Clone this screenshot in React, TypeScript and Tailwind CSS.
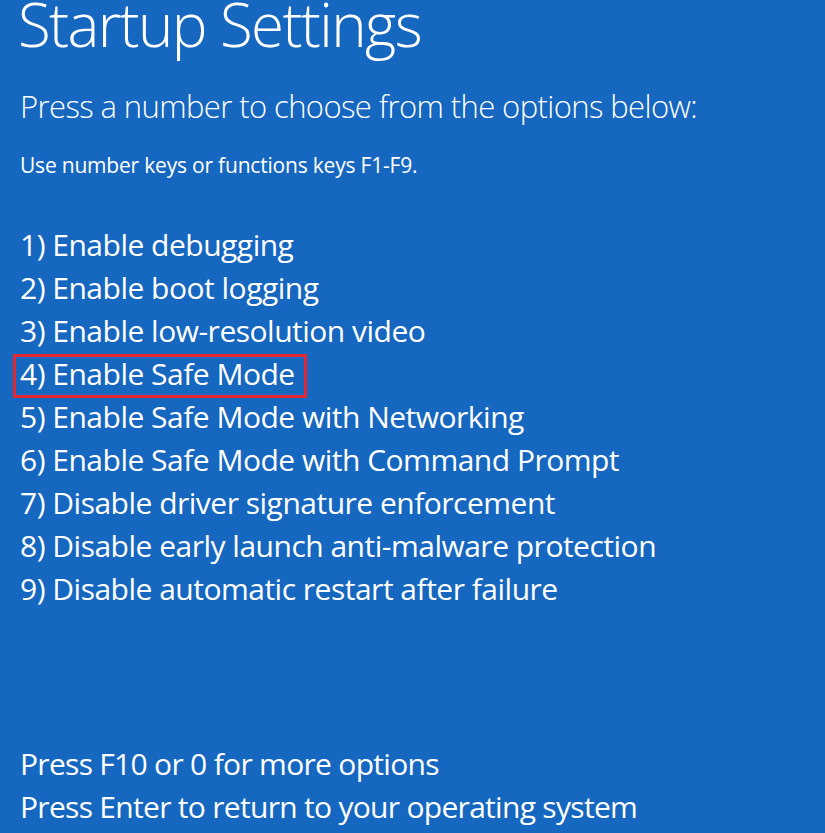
const options = [
  'Enable debugging',
  'Enable boot logging',
  'Enable low-resolution video',
  'Enable Safe Mode',
  'Enable Safe Mode with Networking',
  'Enable Safe Mode with Command Prompt',
  'Disable driver signature enforcement',
  'Disable early launch anti-malware protection',
  'Disable automatic restart after failure',
];

export default function App() {
  return (
    <div
      className="flex min-h-screen w-full flex-col overflow-hidden bg-[#1667c0] pl-[20px] pb-[5px] text-white"
      style={{ fontFamily: '"Open Sans", "Noto Sans", sans-serif' }}
    >
      <h1 className="-mt-[6px] -ml-[2px] text-[60px] leading-[60px] font-light tracking-[-1.6px]">
        Startup Settings
      </h1>
      <p className="mt-[31px] text-[31px] leading-[43px] font-light tracking-[-0.6px]">
        Press a number to choose from the options below:
      </p>
      <p className="mt-[22px] text-[21px] leading-[30px] tracking-[-0.2px]">
        Use number keys or functions keys F1-F9.
      </p>
      <ol className="mt-[43px] flex flex-col">
        {options.map((label, i) => (
          <li key={i} className="text-[30px] leading-[43px] tracking-[-0.5px]">
            {i === 3 ? (
              <span className="relative inline-block">
                {i + 1}) {label}
                <span className="absolute -left-[7px] -right-[12px] top-[2px] -bottom-[3px] border-[3px] border-[#e3262f]" />
              </span>
            ) : (
              <span>
                {i + 1}) {label}
              </span>
            )}
          </li>
        ))}
      </ol>
      <div className="mt-auto flex flex-col">
        <p className="text-[30px] leading-[43px] tracking-[-0.7px]">Press F10 or 0 for more options</p>
        <p className="text-[30px] leading-[43px] tracking-[-0.7px]">
          Press Enter to return to your operating system
        </p>
      </div>
    </div>
  );
}
